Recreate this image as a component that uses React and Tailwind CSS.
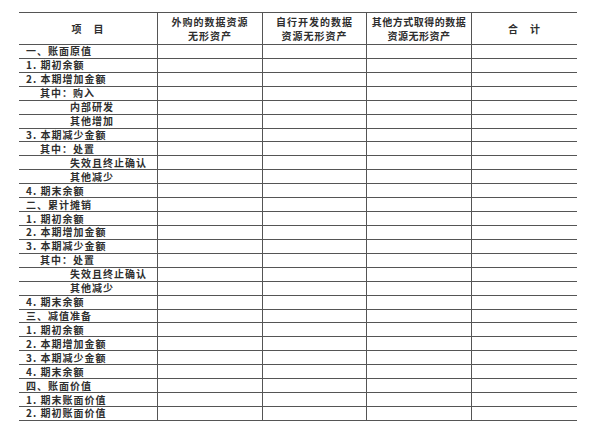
const rows = [
  { t: '一、账面原值', i: 0 },
  { t: '1. 期初余额', i: 0 },
  { t: '2. 本期增加金额', i: 0 },
  { t: '其中：购入', i: 1 },
  { t: '内部研发', i: 2 },
  { t: '其他增加', i: 2 },
  { t: '3. 本期减少金额', i: 0 },
  { t: '其中：处置', i: 1 },
  { t: '失效且终止确认', i: 2 },
  { t: '其他减少', i: 2 },
  { t: '4. 期末余额', i: 0 },
  { t: '二、累计摊销', i: 0 },
  { t: '1. 期初余额', i: 0 },
  { t: '2. 本期增加金额', i: 0 },
  { t: '3. 本期减少金额', i: 0 },
  { t: '其中：处置', i: 1 },
  { t: '失效且终止确认', i: 2 },
  { t: '其他减少', i: 2 },
  { t: '4. 期末余额', i: 0 },
  { t: '三、减值准备', i: 0 },
  { t: '1. 期初余额', i: 0 },
  { t: '2. 本期增加金额', i: 0 },
  { t: '3. 本期减少金额', i: 0 },
  { t: '4. 期末余额', i: 0 },
  { t: '四、账面价值', i: 0 },
  { t: '1. 期末账面价值', i: 0 },
  { t: '2. 期初账面价值', i: 0 },
];

const indent = ['pl-[7px]', 'pl-[21px]', 'pl-[51px]'];
const widths = ['w-[139px]', 'w-[105px]', 'w-[104px]', 'w-[105px]', 'w-[105px]'];
const line = 'border-[#555]';

const Row = ({ children, h }) => (
  <div className={`flex ${h} border-b-[1.5px] ${line}`}>{children}</div>
);

export default function App() {
  return (
    <div
      className="w-[601px] h-[429px] bg-white pt-[12px] pl-[19px] text-[#2e2e2e] font-semibold"
      style={{ fontFamily: '"Noto Sans CJK SC", "Noto Sans", sans-serif' }}
    >
      <div className="w-[558px] border-t-[1.5px] border-[#555]">
        <Row h="h-[32px]">
          <div className={`${widths[0]} border-r-[1.5px] ${line} flex items-center justify-center text-[10px] tracking-[1px]`}>
            项　目
          </div>
          <div className={`${widths[1]} border-r-[1.5px] ${line} flex flex-col items-center justify-center text-[10px] leading-[14px] tracking-[1px]`}>
            <span>外购的数据资源</span>
            <span>无形资产</span>
          </div>
          <div className={`${widths[2]} border-r-[1.5px] ${line} flex flex-col items-center justify-center text-[10px] leading-[14px] tracking-[1px]`}>
            <span>自行开发的数据</span>
            <span>资源无形资产</span>
          </div>
          <div className={`${widths[3]} border-r-[1.5px] ${line} flex flex-col items-center justify-center text-[10px] leading-[14px] tracking-[0.5px]`}>
            <span>其他方式取得的数据</span>
            <span>资源无形资产</span>
          </div>
          <div className={`${widths[4]} flex items-center justify-center text-[10px] tracking-[1px]`}>
            合　计
          </div>
        </Row>
        {rows.map((r, k) => (
          <Row key={k} h="h-[13.93px]">
            <div className={`${widths[0]} border-r-[1.5px] ${line} flex items-center ${indent[r.i]} text-[10px] leading-none tracking-[1px] whitespace-nowrap`}>
              {r.t}
            </div>
            <div className={`${widths[1]} border-r-[1.5px] ${line}`} />
            <div className={`${widths[2]} border-r-[1.5px] ${line}`} />
            <div className={`${widths[3]} border-r-[1.5px] ${line}`} />
            <div className={widths[4]} />
          </Row>
        ))}
      </div>
    </div>
  );
}
